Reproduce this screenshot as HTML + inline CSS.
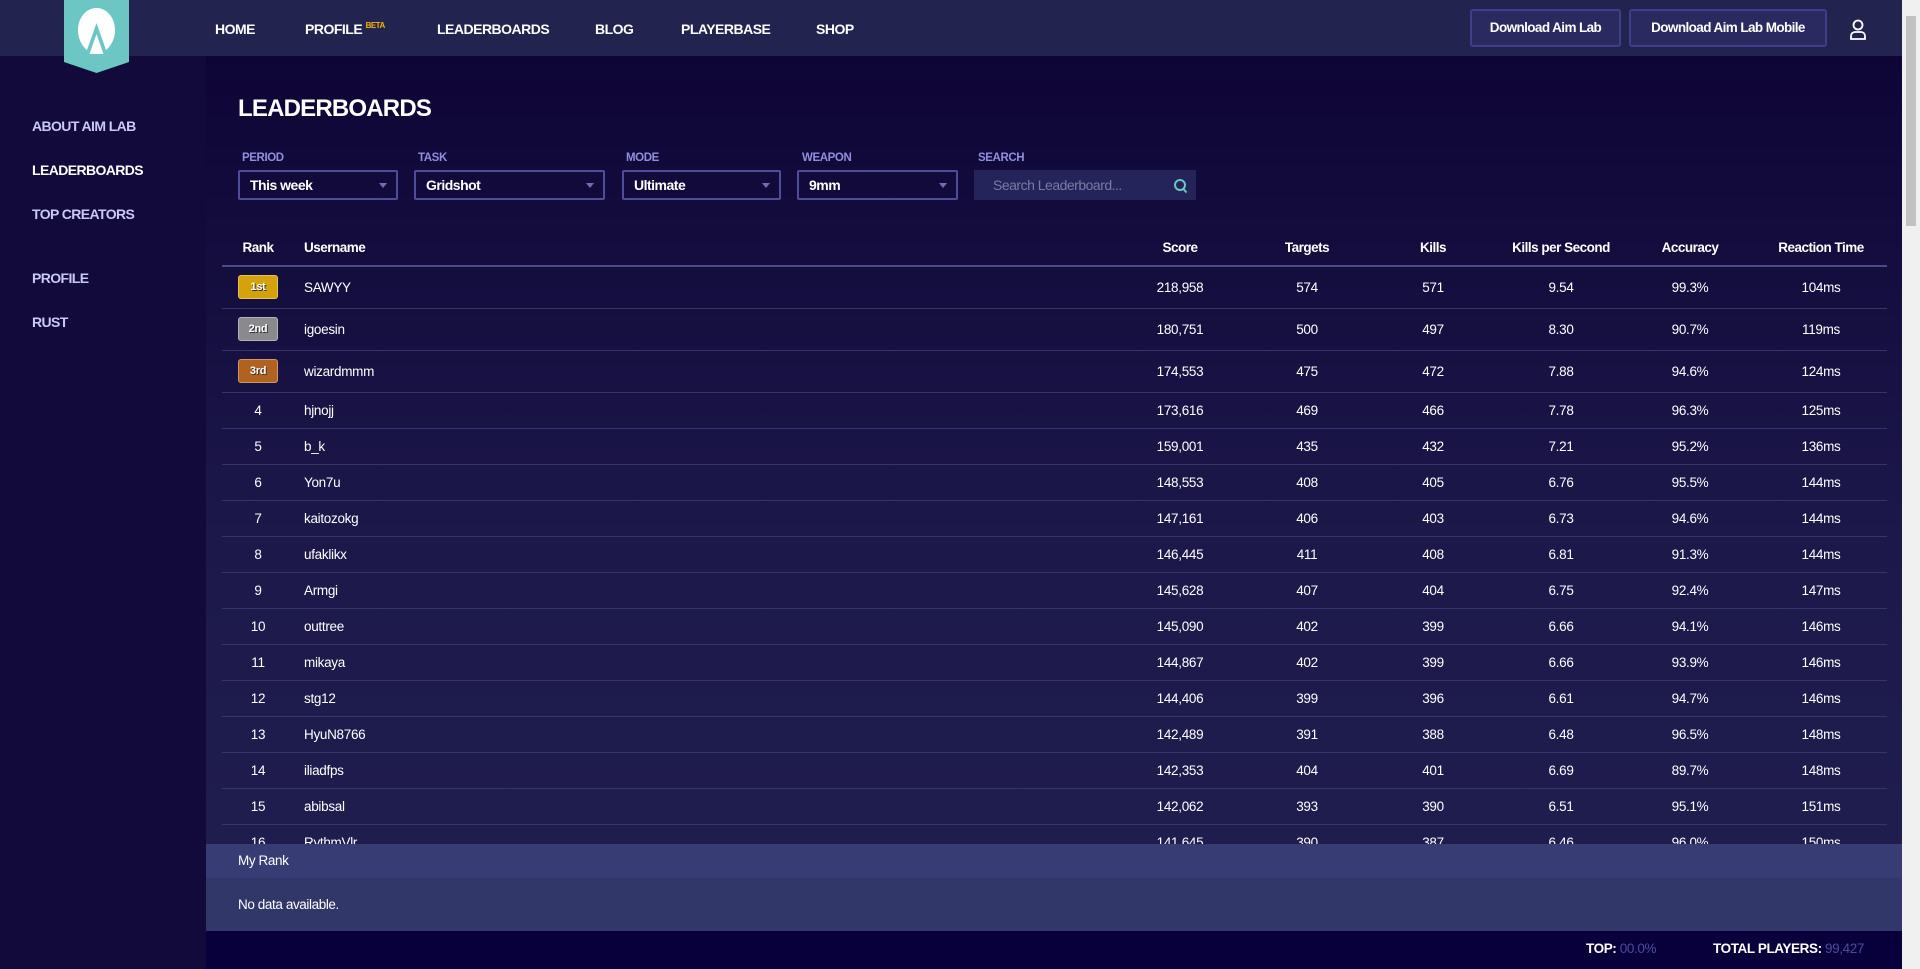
<!DOCTYPE html>
<html><head><meta charset="utf-8"><style>
*{margin:0;padding:0;box-sizing:border-box}
body{width:1920px;height:969px;overflow:hidden;font-family:"Liberation Sans",sans-serif;color:#fff;background:#0e0536;position:relative}
.hdr{position:absolute;left:0;top:0;width:1902px;height:56px;background:#23234f}
.logo{position:absolute;left:64px;top:0;width:65px;height:73px}
.nav{position:absolute;top:21px;font-weight:bold;font-size:14px;letter-spacing:-.5px}
.nav sup{color:#f5b400;font-size:8px;vertical-align:6px}
.btn{position:absolute;top:9px;height:38px;border:2px solid #3e3e8a;border-radius:3px;background:#2a2a60;font-weight:bold;font-size:13.5px;letter-spacing:-.6px;line-height:34px;text-align:center}
.side{position:absolute;left:0;top:56px;width:206px;height:913px;background:#120a3a}
.side div{position:absolute;left:32px;font-weight:bold;font-size:14px;letter-spacing:-.6px;color:#c9c9f5}
.main{position:absolute;left:206px;top:56px;width:1696px;height:875px;background:linear-gradient(#0e0536,#1d1a4b 60%,#201e4f)}
h1{position:absolute;left:238px;top:95px;font-size:24px;font-weight:bold;letter-spacing:-.8px}
.lab{position:absolute;top:152px;font-size:11.5px;font-weight:bold;letter-spacing:-.4px;color:#8f8fe0}
.dd{position:absolute;top:170px;height:30px;border:2px solid #4d4d9a;border-radius:2px;font-weight:bold;font-size:14px;letter-spacing:-.5px;line-height:26px;padding-left:10px}
.dd:after{content:"";position:absolute;right:9px;top:11px;border:4px solid transparent;border-top:5px solid #6f6fb0}
.srch{position:absolute;left:974px;top:170px;width:222px;height:30px;background:#24245a;color:#7a7aa5;font-size:14px;letter-spacing:-.5px;line-height:30px;padding-left:19px}
table{position:absolute;width:1665px;border-collapse:collapse;font-size:13.5px;letter-spacing:-.3px;table-layout:fixed}
th{height:36px;font-weight:bold;font-size:13.5px;letter-spacing:-.5px;border-bottom:2px solid #4b4b8c}
td{border-bottom:1px solid #35356a;height:36px;text-align:center}
tr.t td{height:42px}
td:nth-child(2),th:nth-child(2){text-align:left;padding-left:10px}
.b{display:inline-block;width:40px;height:24px;border-radius:3px;font-weight:bold;font-size:11px;line-height:22px;border:1px solid rgba(255,255,255,.35);text-shadow:1px 1px 0 #333}
.clip{position:absolute;left:206px;top:56px;width:1696px;height:788px;overflow:hidden}
.mr{position:absolute;left:206px;top:844px;width:1696px;height:34px;background:#373d74;font-size:13.5px;letter-spacing:-.4px;line-height:34px;padding-left:32px}
.nd{position:absolute;left:206px;top:878px;width:1696px;height:53px;background:#323769;font-size:13.5px;letter-spacing:-.4px;line-height:53px;padding-left:32px}
.ft{position:absolute;left:206px;top:931px;width:1696px;height:38px;background:#07003a;font-size:13.5px;letter-spacing:-.4px;font-weight:bold}
.ft span{color:#4c4ca0;font-weight:normal}
.sb{position:absolute;left:1902px;top:0;width:18px;height:969px;background:#f0f0f0}
.sb div{position:absolute;left:4px;top:16px;width:10px;height:210px;background:#c1c1c1}
</style></head><body>
<div class="main"></div>
<div class="side"><div style="top:62px">ABOUT AIM LAB</div><div style="top:106px;color:#fff">LEADERBOARDS</div><div style="top:150px">TOP CREATORS</div><div style="top:214px">PROFILE</div><div style="top:258px">RUST</div></div>
<div class="hdr">
<div class="nav" style="left:215px">HOME</div>
<div class="nav" style="left:305px">PROFILE <sup>BETA</sup></div>
<div class="nav" style="left:437px">LEADERBOARDS</div>
<div class="nav" style="left:595px">BLOG</div>
<div class="nav" style="left:681px">PLAYERBASE</div>
<div class="nav" style="left:816px">SHOP</div>
<div class="btn" style="left:1470px;width:151px">Download Aim Lab</div>
<div class="btn" style="left:1629px;width:198px">Download Aim Lab Mobile</div>
<svg style="position:absolute;left:1849px;top:19px" width="18" height="22" viewBox="0 0 18 22" fill="none" stroke="#fff" stroke-width="1.8"><circle cx="9" cy="6" r="4.5"/><path d="M2 20v-3a4 4 0 0 1 4-4h6a4 4 0 0 1 4 4v3z"/></svg>
</div>
<svg class="logo" viewBox="0 0 65 73"><path d="M0 0h65v62l-32.5 11L0 62z" fill="#6cc6c3"/><path d="M32.5 8C22 8 14 18 14 30c0 9 4 16 9 20l9.5-27 9.5 27c5-4 9-11 9-20C51 18 43 8 32.5 8z" fill="#fff"/><path d="M32.5 34l-7 20h14z" fill="#fff"/></svg>
<h1>LEADERBOARDS</h1>
<div class="lab" style="left:242px">PERIOD</div><div class="lab" style="left:418px">TASK</div><div class="lab" style="left:626px">MODE</div><div class="lab" style="left:802px">WEAPON</div><div class="lab" style="left:978px">SEARCH</div>
<div class="dd" style="left:238px;width:160px">This week</div>
<div class="dd" style="left:414px;width:191px">Gridshot</div>
<div class="dd" style="left:622px;width:159px">Ultimate</div>
<div class="dd" style="left:797px;width:161px">9mm</div>
<div class="srch">Search Leaderboard...<svg style="position:absolute;right:8px;top:8px" width="15" height="16" viewBox="0 0 15 16" fill="none" stroke="#6cc6c3" stroke-width="2"><circle cx="7" cy="7" r="5"/><path d="M10.5 11l3 3.5"/></svg></div>
<div class="clip"><table style="left:16px;top:174px">
<colgroup><col style="width:72px"><col style="width:821px"><col style="width:130px"><col style="width:124px"><col style="width:128px"><col style="width:128px"><col style="width:130px"><col style="width:132px"></colgroup>
<tr><th>Rank</th><th>Username</th><th>Score</th><th>Targets</th><th>Kills</th><th>Kills per Second</th><th>Accuracy</th><th>Reaction Time</th></tr>
<tr class="t"><td><span class="b" style="background:#d4a20a">1st</span></td><td>SAWYY</td><td>218,958</td><td>574</td><td>571</td><td>9.54</td><td>99.3%</td><td>104ms</td></tr>
<tr class="t"><td><span class="b" style="background:#8a8a8e">2nd</span></td><td>igoesin</td><td>180,751</td><td>500</td><td>497</td><td>8.30</td><td>90.7%</td><td>119ms</td></tr>
<tr class="t"><td><span class="b" style="background:#b0621e">3rd</span></td><td>wizardmmm</td><td>174,553</td><td>475</td><td>472</td><td>7.88</td><td>94.6%</td><td>124ms</td></tr>
<tr><td>4</td><td>hjnojj</td><td>173,616</td><td>469</td><td>466</td><td>7.78</td><td>96.3%</td><td>125ms</td></tr>
<tr><td>5</td><td>b_k</td><td>159,001</td><td>435</td><td>432</td><td>7.21</td><td>95.2%</td><td>136ms</td></tr>
<tr><td>6</td><td>Yon7u</td><td>148,553</td><td>408</td><td>405</td><td>6.76</td><td>95.5%</td><td>144ms</td></tr>
<tr><td>7</td><td>kaitozokg</td><td>147,161</td><td>406</td><td>403</td><td>6.73</td><td>94.6%</td><td>144ms</td></tr>
<tr><td>8</td><td>ufaklikx</td><td>146,445</td><td>411</td><td>408</td><td>6.81</td><td>91.3%</td><td>144ms</td></tr>
<tr><td>9</td><td>Armgi</td><td>145,628</td><td>407</td><td>404</td><td>6.75</td><td>92.4%</td><td>147ms</td></tr>
<tr><td>10</td><td>outtree</td><td>145,090</td><td>402</td><td>399</td><td>6.66</td><td>94.1%</td><td>146ms</td></tr>
<tr><td>11</td><td>mikaya</td><td>144,867</td><td>402</td><td>399</td><td>6.66</td><td>93.9%</td><td>146ms</td></tr>
<tr><td>12</td><td>stg12</td><td>144,406</td><td>399</td><td>396</td><td>6.61</td><td>94.7%</td><td>146ms</td></tr>
<tr><td>13</td><td>HyuN8766</td><td>142,489</td><td>391</td><td>388</td><td>6.48</td><td>96.5%</td><td>148ms</td></tr>
<tr><td>14</td><td>iliadfps</td><td>142,353</td><td>404</td><td>401</td><td>6.69</td><td>89.7%</td><td>148ms</td></tr>
<tr><td>15</td><td>abibsal</td><td>142,062</td><td>393</td><td>390</td><td>6.51</td><td>95.1%</td><td>151ms</td></tr>
<tr><td>16</td><td>RythmVlr</td><td>141,645</td><td>390</td><td>387</td><td>6.46</td><td>96.0%</td><td>150ms</td></tr>
</table></div>
<div class="mr">My Rank</div>
<div class="nd">No data available.</div>
<div class="ft"><div style="position:absolute;left:1380px;top:10px">TOP: <span>00.0%</span></div><div style="position:absolute;left:1507px;top:10px">TOTAL PLAYERS: <span>99,427</span></div></div>
<div class="sb"><div></div></div>
</body></html>
